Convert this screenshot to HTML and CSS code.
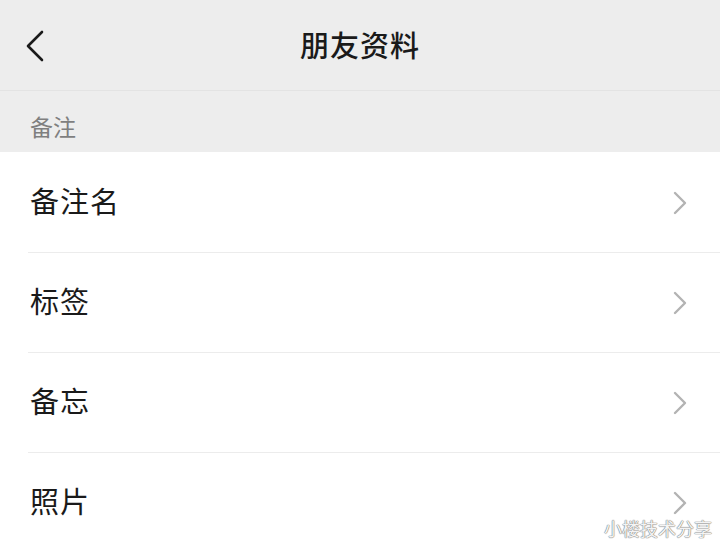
FILE: index.html
```html
<!DOCTYPE html>
<html lang="zh">
<head>
<meta charset="utf-8">
<link rel="stylesheet" href="styles.css">
</head>
<body>
<div class="page">
  <header class="topbar">
    <span class="back">
      <svg width="20" height="32" viewBox="0 0 20 32"><path d="M17 2 L3 16 L17 30" fill="none" stroke="#1a1a1a" stroke-width="2.6" stroke-linecap="round" stroke-linejoin="round"/></svg>
    </span>
    <h1 class="title">朋友资料</h1>
  </header>
  <div class="section-label">备注</div>
  <ul class="list">
    <li class="row"><span class="row-text">备注名</span><svg class="chev" width="14" height="24" viewBox="0 0 14 24"><path d="M2 2 L12 12 L2 22" fill="none" stroke="#b3b3b3" stroke-width="2.4" stroke-linecap="round" stroke-linejoin="round"/></svg></li>
    <li class="row"><span class="row-text">标签</span><svg class="chev" width="14" height="24" viewBox="0 0 14 24"><path d="M2 2 L12 12 L2 22" fill="none" stroke="#b3b3b3" stroke-width="2.4" stroke-linecap="round" stroke-linejoin="round"/></svg></li>
    <li class="row"><span class="row-text">备忘</span><svg class="chev" width="14" height="24" viewBox="0 0 14 24"><path d="M2 2 L12 12 L2 22" fill="none" stroke="#b3b3b3" stroke-width="2.4" stroke-linecap="round" stroke-linejoin="round"/></svg></li>
    <li class="row"><span class="row-text">照片</span><svg class="chev" width="14" height="24" viewBox="0 0 14 24"><path d="M2 2 L12 12 L2 22" fill="none" stroke="#b3b3b3" stroke-width="2.4" stroke-linecap="round" stroke-linejoin="round"/></svg></li>
  </ul>
  <div class="watermark">小楼技术分享</div>
</div>
</body>
</html>
```
FILE: styles.css
```css
* { box-sizing: border-box; }
html, body { margin: 0; padding: 0; }
body {
  width: 720px;
  height: 549px;
  overflow: hidden;
  background: #ffffff;
  font-family: "Noto Sans CJK SC", "Noto Sans", sans-serif;
}
.page {
  position: relative;
  width: 720px;
  height: 549px;
  background: #ffffff;
}
.topbar {
  position: relative;
  height: 91px;
  background: #ededed;
  border-bottom: 1px solid #e3e3e3;
  display: flex;
  align-items: center;
  justify-content: center;
}
.back {
  position: absolute;
  left: 25px;
  top: 30px;
  display: flex;
}
.title {
  margin: 0;
  font-size: 29px;
  font-weight: 500;
  color: #1a1a1a;
  letter-spacing: 1px;
  line-height: 1;
  margin-top: -2px;
}
.section-label {
  height: 61px;
  background: #ededed;
  color: #7f7f7f;
  font-size: 23px;
  padding-left: 30px;
  line-height: 1;
  padding-top: 24px;
}
.list {
  list-style: none;
  margin: 0;
  padding: 0;
  background: #ffffff;
}
.row {
  height: 100px;
  display: flex;
  align-items: center;
  justify-content: space-between;
  padding-left: 30px;
  padding-right: 33px;
  position: relative;
}
.row + .row::before {
  content: "";
  position: absolute;
  left: 28px;
  right: 0;
  top: 0;
  height: 1px;
  background: #ececec;
}
.row-text {
  font-size: 29px;
  color: #1a1a1a;
  line-height: 1;
  letter-spacing: 1px;
  margin-top: -3px;
}
.chev { display: block; margin-top: 2px; }
.watermark {
  position: absolute;
  right: 8px;
  bottom: 12px;
  font-size: 18px;
  color: #f4f4f4;
  line-height: 1;
  text-shadow: 0 0 1px #777, 0 0 1px #888, 0 0 1px #999;
}
```
